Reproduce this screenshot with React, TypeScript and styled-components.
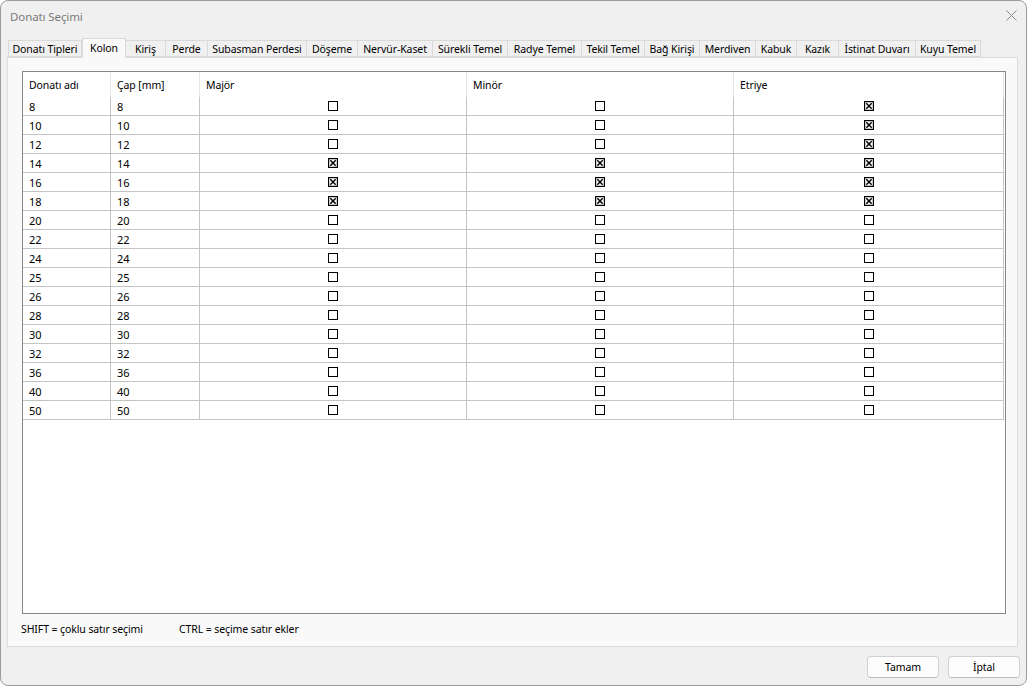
import { createGlobalStyle } from 'styled-components';
import styled from 'styled-components';
import { Fragment } from 'react';

const GlobalStyle = createGlobalStyle`
  html, body {
    margin: 0;
    padding: 0;
    background: #ffffff;
  }
  * {
    box-sizing: border-box;
  }
  body {
    font-family: "Noto Sans", "Open Sans", sans-serif;
    font-size: 10.5px;
    letter-spacing: -0.1px;
    color: #000;
  }
`;

const Window = styled.div`
  width: 1027px;
  height: 686px;
  border: 1px solid #9c9c9c;
  border-radius: 8px;
  background: #f0f0f0;
  display: flex;
  flex-direction: column;
  overflow: hidden;
`;

const TitleBar = styled.div`
  height: 31px;
  display: flex;
  align-items: center;
  justify-content: space-between;
  padding: 0 8px 0 9px;
  flex: none;
`;

const Title = styled.span`
  font-size: 11.5px;
  color: #7a7a7a;
`;

const CloseButton = styled.div`
  width: 14px;
  height: 14px;
  display: flex;
  align-items: center;
  justify-content: center;
  margin-top: -3px;
`;

const TabStrip = styled.div`
  height: 19px;
  margin-top: 6px;
  padding-left: 7px;
  display: flex;
  align-items: flex-end;
  flex: none;
  position: relative;
  z-index: 1;
`;

const Tab = styled.div<{ $w: number; $active?: boolean }>`
  flex: none;
  width: ${({ $w }) => $w}px;
  height: ${({ $active }) => ($active ? 20 : 17)}px;
  margin-bottom: ${({ $active }) => ($active ? -1 : 0)}px;
  padding-bottom: ${({ $active }) => ($active ? 2 : 0)}px;
  background: ${({ $active }) => ($active ? '#f9f9f9' : '#f0f0f0')};
  border: 1px solid #d9d9d9;
  border-left-width: ${({ $active }) => ($active ? 1 : 0)}px;
  border-bottom: ${({ $active }) => ($active ? 'none' : '1px solid #d9d9d9')};
  display: flex;
  align-items: center;
  justify-content: center;
  white-space: nowrap;
  &:first-child {
    border-left-width: 1px;
  }
`;

const Panel = styled.div`
  height: 590px;
  margin: 0 8px 0 6px;
  border: 1px solid #dcdcdc;
  background: #f9f9f9;
  padding: 13px 11px 0 14px;
  display: flex;
  flex-direction: column;
  flex: none;
`;

const TableBox = styled.div`
  height: 543px;
  border: 1px solid #828790;
  background: #ffffff;
  flex: none;
`;

const Grid = styled.div`
  display: grid;
  grid-template-columns: 88px 89px 267px 267px 270px;
`;

const HeadCell = styled.div`
  height: 25px;
  padding-left: 6px;
  display: flex;
  align-items: center;
  border-right: 1px solid #e5e5e5;
  white-space: nowrap;
`;

const Cell = styled.div<{ $center?: boolean }>`
  height: 19px;
  display: flex;
  align-items: center;
  justify-content: ${({ $center }) => ($center ? 'center' : 'flex-start')};
  padding-left: ${({ $center }) => ($center ? 0 : 6)}px;
  border-right: 1px solid #c4c4c4;
  border-bottom: 1px solid #c4c4c4;
  font-size: 11px;
`;

const Notes = styled.div`
  display: flex;
  padding-top: 7px;
  line-height: 16px;
  margin-left: -1px;
`;

const Note = styled.span<{ $w?: number }>`
  width: ${({ $w }) => ($w ? `${$w}px` : 'auto')};
  white-space: nowrap;
`;

const Footer = styled.div`
  display: flex;
  justify-content: flex-end;
  gap: 9px;
  padding: 9px 6px 0 0;
`;

const Button = styled.button`
  width: 72px;
  height: 22px;
  border: 1px solid #d0d0d0;
  border-bottom-color: #bcbcbc;
  border-radius: 4px;
  background: #fdfdfd;
  font-family: inherit;
  font-size: 10.5px;
  letter-spacing: -0.1px;
  color: #000;
  padding: 0;
`;

const Check = ({ on }: { on: boolean }) => (
  <svg width="10" height="10" viewBox="0 0 10 10">
    <rect x="0.5" y="0.5" width="9" height="9" fill="#fff" stroke="#000" strokeWidth={on ? 1.4 : 1} />
    {on && (
      <path d="M2.3 2.3 L7.7 7.7 M7.7 2.3 L2.3 7.7" stroke="#000" strokeWidth="1.5" />
    )}
  </svg>
);

const tabs: [string, number][] = [
  ['Donatı Tipleri', 74],
  ['Kolon', 44],
  ['Kiriş', 40],
  ['Perde', 42],
  ['Subasman Perdesi', 99],
  ['Döşeme', 51],
  ['Nervür-Kaset', 75],
  ['Sürekli Temel', 75],
  ['Radye Temel', 74],
  ['Tekil Temel', 63],
  ['Bağ Kirişi', 55],
  ['Merdiven', 56],
  ['Kabuk', 41],
  ['Kazık', 42],
  ['İstinat Duvarı', 77],
  ['Kuyu Temel', 65],
];

const sizes = [8, 10, 12, 14, 16, 18, 20, 22, 24, 25, 26, 28, 30, 32, 36, 40, 50];
const majorOn = [14, 16, 18];
const etriyeOn = [8, 10, 12, 14, 16, 18];

export default function App() {
  return (
    <>
      <GlobalStyle />
      <Window>
        <TitleBar>
          <Title>Donatı Seçimi</Title>
          <CloseButton>
            <svg width="11" height="11" viewBox="0 0 11 11">
              <path d="M0.5 0.5 L10.5 10.5 M10.5 0.5 L0.5 10.5" stroke="#8a8a8a" strokeWidth="1" />
            </svg>
          </CloseButton>
        </TitleBar>
        <TabStrip>
          {tabs.map(([label, w]) => (
            <Tab key={label} $w={w} $active={label === 'Kolon'}>
              {label}
            </Tab>
          ))}
        </TabStrip>
        <Panel>
          <TableBox>
            <Grid>
              <HeadCell>Donatı adı</HeadCell>
              <HeadCell>Çap [mm]</HeadCell>
              <HeadCell>Majör</HeadCell>
              <HeadCell>Minör</HeadCell>
              <HeadCell>Etriye</HeadCell>
              {sizes.map((s) => (
                <Fragment key={s}>
                  <Cell>{s}</Cell>
                  <Cell>{s}</Cell>
                  <Cell $center>
                    <Check on={majorOn.includes(s)} />
                  </Cell>
                  <Cell $center>
                    <Check on={majorOn.includes(s)} />
                  </Cell>
                  <Cell $center>
                    <Check on={etriyeOn.includes(s)} />
                  </Cell>
                </Fragment>
              ))}
            </Grid>
          </TableBox>
          <Notes>
            <Note $w={158}>SHIFT = çoklu satır seçimi</Note>
            <Note>CTRL = seçime satır ekler</Note>
          </Notes>
        </Panel>
        <Footer>
          <Button>Tamam</Button>
          <Button>İptal</Button>
        </Footer>
      </Window>
    </>
  );
}
